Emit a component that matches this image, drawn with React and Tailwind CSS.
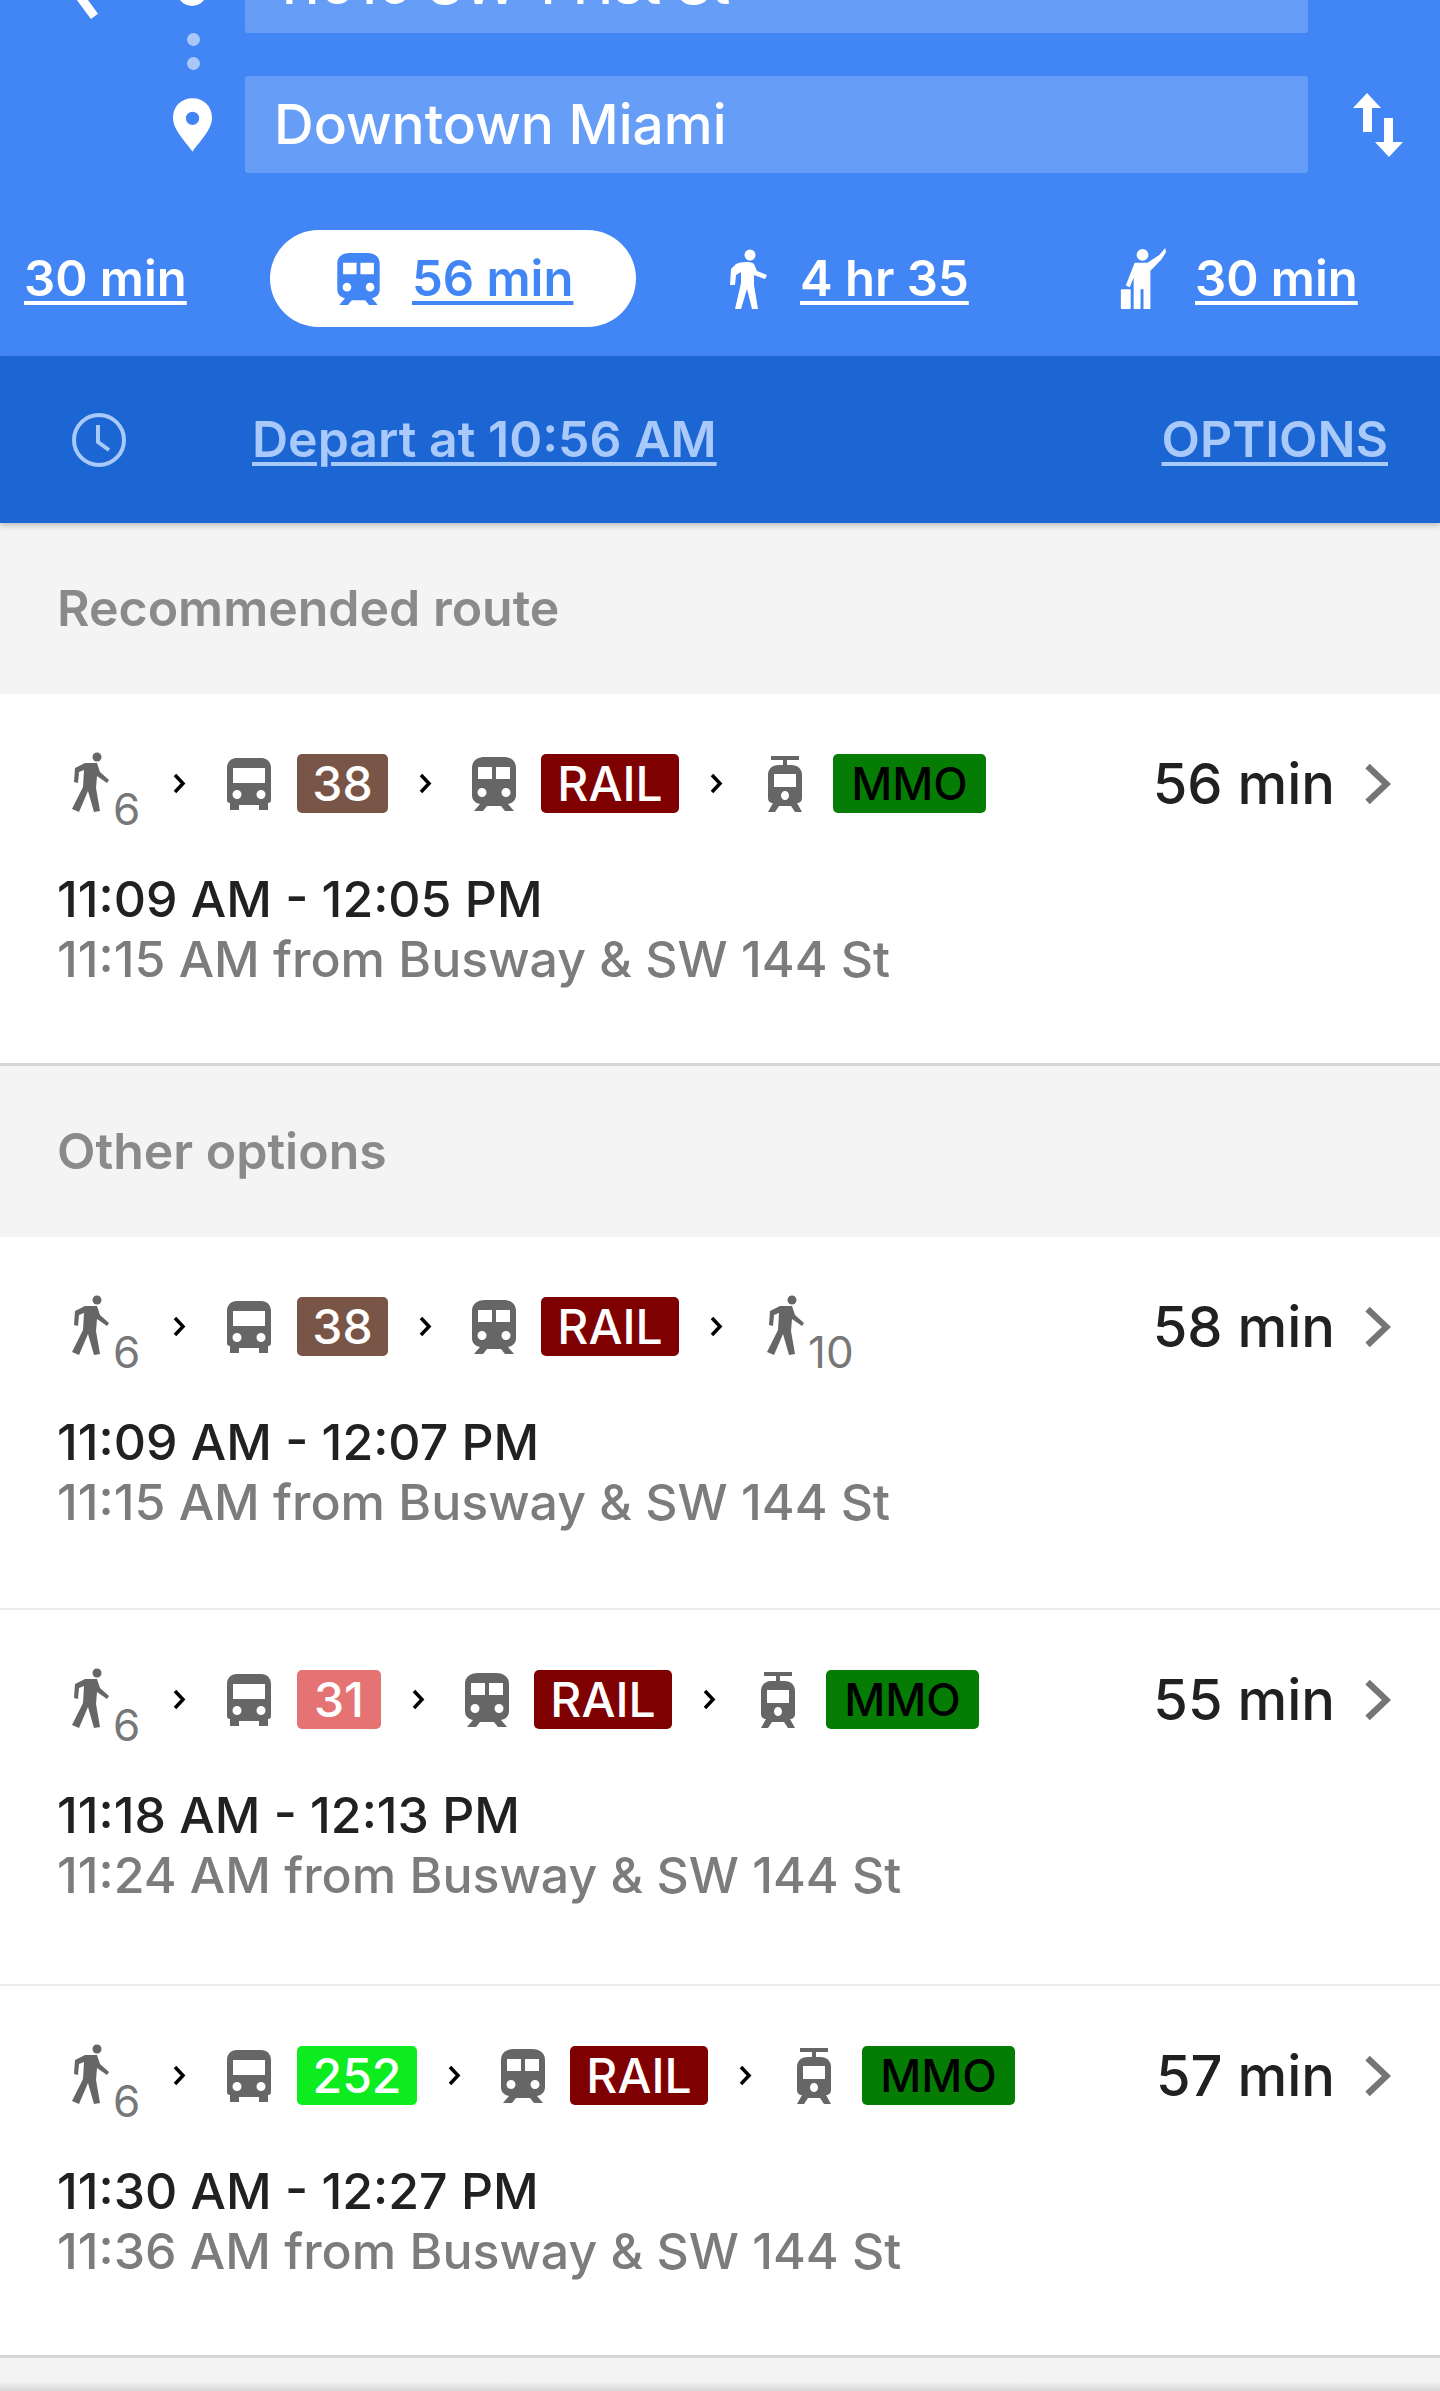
const WalkIcon = ({ className }) => (
  <svg viewBox="0 0 37 62" className={className} fill="currentColor">
    <circle cx="25" cy="5" r="4.500" />
    <path d="M13 11 H25 L28 20 L37 28 L35 31 L25 24 L24 36 L28 59 L22 60 L16 39 L7 60 L0 57 L11 35 L12 18 L7 20 L6 31 L2 30 L3 16 Z" />
  </svg>
);

const TabWalkIcon = ({ className }) => (
  <svg viewBox="0 0 39 60" className={className} fill="currentColor">
    <circle cx="22" cy="6" r="5.500" />
    <path d="M8 15 C12 13 23 12 26 15 L29 22 L39 26 L37 30 L26 26 V36 L30 60 H24 L19 40 L13 60 H7 L13 34 V23 L8 26 L7 36 H2 L3 20 Z" />
  </svg>
);

const BusIcon = ({ className }) => (
  <svg viewBox="0 0 44 52" className={className} fill="currentColor">
    <path fillRule="evenodd" d="M10 0 H34 C40 0 44 4 44 10 V42 C44 44 43 45 41 45 V52 H32 V47 H12 V52 H3 V45 C1 45 0 44 0 42 V10 C0 4 4 0 10 0 Z M6 10 V25 H38 V10 Z M10 32 A4.500 4.500 0 1 0 10 41 A4.500 4.500 0 1 0 10 32 Z M34 32 A4.500 4.500 0 1 0 34 41 A4.500 4.500 0 1 0 34 32 Z" />
  </svg>
);

const TrainIcon = ({ className }) => (
  <svg viewBox="0 0 44 54" className={className} fill="currentColor">
    <path fillRule="evenodd" d="M13 0 H31 C39 0 44 4 44 11 V38 C44 43 41 46 36 47 L42 54 H33 L29 49 H15 L11 54 H2 L8 47 C3 46 0 43 0 38 V11 C0 4 5 0 13 0 Z M6 10 V22 H20 V10 Z M24 10 V22 H38 V10 Z M10 31 A4.500 4.500 0 1 0 10 40 A4.500 4.500 0 1 0 10 31 Z M34 31 A4.500 4.500 0 1 0 34 40 A4.500 4.500 0 1 0 34 31 Z" />
  </svg>
);

const TramIcon = ({ className }) => (
  <svg viewBox="0 0 40 56" className={className} fill="currentColor">
    <path fillRule="evenodd" d="M6 0 H34 V4 H22 V9 H26 C33 9 37 13 37 19 V42 C37 45 35 47 32 47 L37 56 H30 L26 50 H14 L10 56 H3 L8 47 C5 47 3 45 3 42 V19 C3 13 7 9 14 9 H18 V4 H6 Z M9 18 V31 H31 V18 Z M20 35 A4 4.500 0 1 0 20 44 A4 4.500 0 1 0 20 35 Z" />
  </svg>
);

const Chevron = ({ className }) => (
  <svg viewBox="0 0 13 21" className={`w-[13px] h-[21px] text-black ${className}`} fill="none" stroke="currentColor" strokeWidth="3.500">
    <path d="M2 2 L10 10.500 L2 19" />
  </svg>
);

const Badge = ({ bg, color = 'text-white', size = 'text-[48px]', width, children }) => (
  <span className={`${bg} ${color} ${size} ${width} h-[59px] shrink-0 rounded-[5px] flex items-center justify-center font-medium`}>
    {children}
  </span>
);

const Walk = ({ mins, className }) => (
  <div className={`relative h-[59px] shrink-0 text-[#666] ${className}`}>
    <WalkIcon className="absolute left-[15px] top-[-2px] w-[37px] h-[62px]" />
    <span className="absolute left-[56px] top-[25px] text-[#777] text-[44px] leading-[60px]">{mins}</span>
  </div>
);

const badges = {
  b38: { bg: 'bg-[#795548]', label: '38', width: 'w-[91px]' },
  b31: { bg: 'bg-[#e57373]', label: '31', width: 'w-[84px]' },
  b252: { bg: 'bg-[#0dec1f]', label: '252', width: 'w-[120px]' },
};

const routes = [
  { bus: 'b38', end: 'mmo', total: '56 min', times: '11:09 AM - 12:05 PM', from: '11:15 AM from Busway & SW 144 St', h: 'h-[372px]', border: 'border-b-[3px] border-[#d6d6d6]' },
  { bus: 'b38', end: 'walk', total: '58 min', times: '11:09 AM - 12:07 PM', from: '11:15 AM from Busway & SW 144 St', h: 'h-[373px]', border: 'border-b-2 border-[#ececec]' },
  { bus: 'b31', end: 'mmo', total: '55 min', times: '11:18 AM - 12:13 PM', from: '11:24 AM from Busway & SW 144 St', h: 'h-[376px]', border: 'border-b-2 border-[#ececec]' },
  { bus: 'b252', end: 'mmo', total: '57 min', times: '11:30 AM - 12:27 PM', from: '11:36 AM from Busway & SW 144 St', h: 'h-[372px]', border: 'border-b-[3px] border-[#d6d6d6]' },
];

const RouteRow = ({ route }) => {
  const badge = badges[route.bus];
  return (
    <div className={`bg-white ${route.h} ${route.border} pl-[57px] pr-[49px] pt-[60px]`}>
      <div className="flex items-center h-[59px]">
        <Walk mins="6" className="w-[116px]" />
        <Chevron />
        <BusIcon className="ml-[41px] w-[44px] h-[52px] text-[#666]" />
        <div className="ml-[26px]">
          <Badge bg={badge.bg} width={badge.width}>{badge.label}</Badge>
        </div>
        <Chevron className="ml-[31px]" />
        <TrainIcon className="ml-[40px] w-[44px] h-[54px] text-[#666]" />
        <div className="ml-[25px]">
          <Badge bg="bg-[#7f0000]" width="w-[138px]">RAIL</Badge>
        </div>
        <Chevron className="ml-[31px]" />
        {route.end === 'mmo' ? (
          <>
            <TramIcon className="ml-[42px] w-[40px] h-[56px] text-[#666]" />
            <div className="ml-[28px]">
              <Badge bg="bg-[#057d05]" color="text-black" size="text-[45px]" width="w-[153px]">MMO</Badge>
            </div>
          </>
        ) : (
          <Walk mins="10" className="ml-[29px] w-[140px]" />
        )}
        <div className="ml-auto flex items-center">
          <span className="text-[56px] font-medium text-[#212121]">{route.total}</span>
          <svg viewBox="0 0 25 40" className="ml-[29px] w-[27px] h-[42px] text-[#757575]" fill="none" stroke="currentColor" strokeWidth="6">
            <path d="M3 3 L21 20 L3 37" />
          </svg>
        </div>
      </div>
      <div className="mt-[56px] text-[50px] font-medium leading-[60px] text-[#212121]">{route.times}</div>
      <div className="text-[50px] font-medium leading-[60px] text-[#7c7c7c]">{route.from}</div>
    </div>
  );
};

const SectionTitle = ({ children }) => (
  <div className="h-[171px] flex items-center px-[57px] text-[50px] font-semibold text-[#8a8a8a]">
    {children}
  </div>
);

const TabLabel = ({ children, color = 'text-white', size = 'text-[49px]' }) => (
  <span className={`${size} font-semibold underline underline-offset-[5px] decoration-[4px] ${color}`}>{children}</span>
);

const App = () => {
  return (
    <div className="w-[1440px] h-[2391px] overflow-hidden bg-[#f4f4f4] font-['Inter','Roboto',sans-serif]">
      <header className="bg-[#4285f4] h-[356px] overflow-hidden">
        <div className="flex mt-[-64px]">
          <div className="w-[160px] relative">
            <svg viewBox="0 0 40 90" className="absolute left-[62px] top-[11px] w-[40px] h-[80px] text-white" fill="none" stroke="currentColor" strokeWidth="10">
              <path d="M34 2 L6 40 L34 78" />
            </svg>
            <span className="absolute left-[177px] top-[40px] w-[30px] h-[30px] rounded-full border-[6px] border-white" />
            <span className="absolute left-[187px] top-[97px] w-[13px] h-[13px] rounded-full bg-[#a9c8f8]" />
            <span className="absolute left-[187px] top-[121px] w-[13px] h-[13px] rounded-full bg-[#a9c8f8]" />
            <svg viewBox="0 0 38 52" className="absolute left-[173px] top-[162px] w-[39px] h-[54px] text-white" fill="currentColor">
              <path fillRule="evenodd" d="M19 0 C30 0 38 8 38 19 C38 31 25 43 19 52 C13 43 0 31 0 19 C0 8 8 0 19 0 Z M19 13 A6.500 6.500 0 1 0 19 26 A6.500 6.500 0 1 0 19 13 Z" />
            </svg>
          </div>
          <div className="ml-[85px] w-[1063px] flex flex-col gap-[43px]">
            <div className="h-[97px] bg-[#669df6] rounded-[3px] px-[29px] flex items-center text-[55px] font-medium text-white">11610 SW 141st St</div>
            <div className="h-[97px] bg-[#669df6] rounded-[3px] px-[29px] flex items-center text-[55px] font-medium text-white">Downtown Miami</div>
          </div>
          <div className="ml-[45px] flex-1 mt-[157px]">
            <svg viewBox="0 0 50 64" className="w-[50px] h-[64px] text-white" fill="currentColor">
              <path d="M14 0 L28 15 H19 V39 H10 V15 H0 Z" />
              <path d="M36 64 L22 49 H31 V25 H40 V49 H50 Z" />
            </svg>
          </div>
        </div>
        <div className="mt-[57px] flex items-center h-[97px]">
          <div className="ml-[24px] w-[246px]"><TabLabel>30 min</TabLabel></div>
          <div className="w-[366px] h-[97px] rounded-full bg-white flex items-center pl-[67px]">
            <TrainIcon className="w-[43px] h-[52px] text-[#4285f4]" />
            <span className="ml-[32px]"><TabLabel color="text-[#4285f4]">56 min</TabLabel></span>
          </div>
          <div className="ml-[92px] w-[392px] flex items-center">
            <TabWalkIcon className="w-[39px] h-[60px] text-white" />
            <span className="ml-[33px]"><TabLabel>4 hr 35</TabLabel></span>
          </div>
          <div className="flex items-center">
            <svg viewBox="0 0 46 62" className="w-[47px] h-[61px] text-white" fill="currentColor">
              <circle cx="22" cy="7" r="6" />
              <path d="M14 15 H27 L39 7 L45 0 L46 4 L41 12 L30 23 V62 H23 V42 H20 V62 H13 V30 L9 40 L5 38 Z" />
              <rect x="0" y="42" width="10" height="20" rx="1" />
            </svg>
            <span className="ml-[28px]"><TabLabel>30 min</TabLabel></span>
          </div>
        </div>
      </header>

      <div className="bg-[#1b66d2] h-[167px] flex items-center shadow-[0_3px_5px_rgba(0,0,0,0.2)] relative">
        <svg viewBox="0 0 56 56" className="ml-[71px] w-[56px] h-[56px] text-[#a8c9fa]" fill="none" stroke="currentColor" strokeWidth="4">
          <circle cx="28" cy="28" r="25" />
          <path d="M27 13 V30 L38 38" />
        </svg>
        <span className="ml-[125px]"><TabLabel color="text-[#a8c9fa]" size="text-[50px]">Depart at 10:56 AM</TabLabel></span>
        <span className="ml-auto mr-[52px]"><TabLabel color="text-[#a8c9fa]" size="text-[50px]">OPTIONS</TabLabel></span>
      </div>

      <SectionTitle>Recommended route</SectionTitle>
      <RouteRow route={routes[0]} />
      <SectionTitle>Other options</SectionTitle>
      <RouteRow route={routes[1]} />
      <RouteRow route={routes[2]} />
      <RouteRow route={routes[3]} />
      <div className="h-[33px] bg-gradient-to-b from-[#f3f3f3] via-[#f3f3f3] via-70% to-[#d8d8d8]" />
    </div>
  );
};

export default App;
